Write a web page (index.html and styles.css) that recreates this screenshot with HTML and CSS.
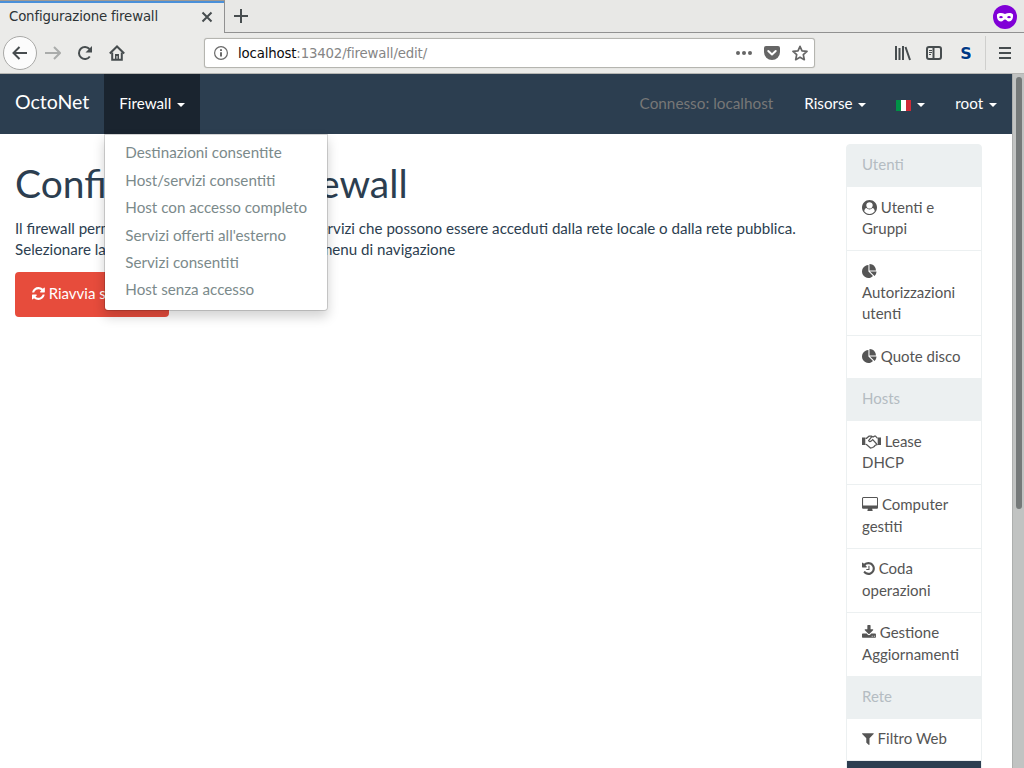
FILE: index.html
```
<!DOCTYPE html>
<html lang="it">
<head>
    <meta charset="UTF-8">
    <meta name="viewport" content="width=device-width, initial-scale=1.0">
    <title>Configurazione firewall</title>
    <link rel="stylesheet" href="styles.css">
</head>
<body>
    <!-- Browser window -->
    <div class="tab-bar">
        <div class="tab">
            <span class="tab-title">Configurazione firewall</span>
            <svg class="tab-close" viewBox="0 0 12 12"><path d="M1.5 1.5l9 9M10.5 1.5l-9 9"/></svg>
        </div>
        <svg class="tab-new" viewBox="0 0 14 14"><path d="M7 0v14M0 7h14"/></svg>
        <svg class="private" viewBox="0 0 24 24">
            <circle cx="12" cy="12" r="12" fill="#8000d7"/>
            <path fill="#fff" fill-rule="evenodd" d="M4 9.500C6 7.600 9 7.600 12 9c3-1.400 6-1.400 8 .5.400 4-1.200 7-4 7-2 0-2.500-2-4-2s-2 2-4 2c-2.800 0-4.400-3-4-7zM6 12.200c1 1.300 3 1.300 4 0-1-1.500-3-1.500-4 0zm8 0c1 1.300 3 1.300 4 0-1-1.500-3-1.500-4 0z"/>
        </svg>
    </div>
    <div class="toolbar">
        <div class="back-button">
            <svg viewBox="0 0 16 16"><path d="M15 8H1.500M7.500 2L1.500 8l6 6"/></svg>
        </div>
        <svg class="forward" viewBox="0 0 16 16"><path d="M0 8h14.500M9 2l6 6-6 6"/></svg>
        <svg class="reload" viewBox="0 0 16 16"><path d="M12.800 11.500A6 6 0 1 1 12.500 4"/><path class="solid" d="M15 1v6.500H8.500z"/></svg>
        <svg class="home" viewBox="0 0 16 16"><path d="M.8 8.500L8 1.500l7.200 7"/><path d="M3.200 7.500v7.200h9.600V7.500"/><path class="solid" d="M6 15v-4.500h1.500V15zM8.500 15v-4.500H10V15zM6 9h4v2H6z"/></svg>
        <div class="url-bar">
            <svg class="info" viewBox="0 0 14 14"><circle cx="7" cy="7" r="6.400"/><path class="mark" d="M7 6.200v4.300M7 3.300v1.700"/></svg>
            <span class="url"><span class="host">localhost</span>:13402/firewall/edit/</span>
            <svg class="dots" viewBox="0 0 16 4"><circle cx="2" cy="2" r="2"/><circle cx="8" cy="2" r="2"/><circle cx="14" cy="2" r="2"/></svg>
            <svg class="pocket" viewBox="0 0 16 16"><path d="M2 1h12q2 0 2 2v4a8 8 0 0 1-16 0V3q0-2 2-2z"/><path class="check" d="M4.300 6L8 9.500 11.700 6"/></svg>
            <svg class="star" viewBox="0 0 16 16"><path d="M8 1.300l2 4.500 5 .6-3.700 3.300 1 5L8 12.200l-4.300 2.500 1-5L1 6.400l5-.6z"/></svg>
        </div>
        <svg class="library" viewBox="0 0 16 16"><path d="M1 1v14M4.500 3v12M8 1v14M10.500 2l4.500 13"/></svg>
        <svg class="sidebars" viewBox="0 0 16 16"><rect x="1" y="2" width="14" height="12" rx="2"/><path d="M7.500 2v12"/><path class="thin" d="M3 5.500h3M3 7.500h3M3 9.500h2"/></svg>
        <span class="addon">S</span>
        <span class="separator"></span>
        <svg class="menu" viewBox="0 0 12 12"><path d="M0 1h12M0 6h12M0 11h12"/></svg>
    </div>

    <!-- Page -->
    <div class="viewport">
        <div class="page">
            <nav class="navbar">
                <a class="brand">OctoNet</a>
                <div class="nav-item open">
                    <a class="nav-link">Firewall <b class="caret"></b></a>
                    <ul class="dropdown-menu">
                        <li>Destinazioni consentite</li>
                        <li>Host/servizi consentiti</li>
                        <li>Host con accesso completo</li>
                        <li>Servizi offerti all'esterno</li>
                        <li>Servizi consentiti</li>
                        <li>Host senza accesso</li>
                    </ul>
                </div>
                <span class="nav-text">Connesso: localhost</span>
                <a class="nav-link">Risorse <b class="caret"></b></a>
                <a class="nav-link"><svg class="flag" viewBox="0 0 15 11"><path fill="#fff" d="M0 0h15v11H0z"/><path fill="#009246" d="M0 0h5v11H0z"/><path fill="#ce2b37" d="M10 0h5v11h-5z"/></svg> <b class="caret"></b></a>
                <a class="nav-link">root <b class="caret"></b></a>
            </nav>

            <div class="content">
                <main class="main">
                    <h1>Configurazione firewall</h1>
                    <p>Il firewall permette di specificare gli host ed i servizi che possono essere acceduti dalla rete locale o dalla rete pubblica.<br>
                    Selezionare la voce da configurare mediante il menu di navigazione</p>
                    <button class="btn-danger"><svg class="icon" viewBox="128 0 1536 1792"><path d="M1639 1056q0 5-1 7-64 268-268 434.500t-478 166.500q-146 0-282.500-55t-243.500-157l-129 129q-19 19-45 19t-45-19-19-45v-448q0-26 19-45t45-19h448q26 0 45 19t19 45-19 45l-137 137q71 66 161 102t187 36q134 0 250-65t186-179q11-17 53-117 8-23 30-23h192q13 0 22.500 9.500t9.500 22.500zm25-800v448q0 26-19 45t-45 19h-448q-26 0-45-19t-19-45 19-45l138-138q-148-137-349-137-134 0-250 65t-186 179q-11 17-53 117-8 23-30 23h-199q-13 0-22.500-9.500t-9.500-22.500v-7q65-268 270-434.500t480-166.500q146 0 284 55.500t245 156.500l130-129q19-19 45-19t45 19 19 45z"/></svg> Riavvia servizio</button>
                </main>

                <aside class="list-group">
                    <div class="list-item heading">Utenti</div>
                    <a class="list-item"><svg class="icon" viewBox="0 0 1792 1792"><path d="M1523 1339q-22-155-87.500-257.500t-184.500-118.500q-67 74-159.500 115.500t-195.500 41.500-195.500-41.500-159.500-115.500q-119 16-184.500 118.500t-87.500 257.500q106 150 271 237.500t356 87.500 356-87.500 271-237.500zm-243-699q0-159-112.500-271.500t-271.500-112.500-271.500 112.500-112.500 271.500 112.500 271.500 271.500 112.500 271.500-112.500 112.500-271.500zm512 256q0 182-71 347.500t-190.500 286-285.500 191.500-349 71-349-71-285.500-191.500-190.500-286-71-347.500 71-348 191-286 286-191 348-71 348 71 286 191 191 286 71 348z"/></svg> Utenti e Gruppi</a>
                    <a class="list-item"><svg class="icon" viewBox="0 0 1792 1792"><path d="M768 890l546 546q-106 108-247.500 168t-298.500 60q-209 0-385.500-103t-279.500-279.500-103-385.500 103-385.500 279.500-279.500 385.500-103v762zm187 6h773q0 157-60 298.500t-168 247.500zm709-128h-768v-768q209 0 385.500 103t279.500 279.500 103 385.500z"/></svg> Autorizzazioni utenti</a>
                    <a class="list-item"><svg class="icon" viewBox="0 0 1792 1792"><path d="M768 890l546 546q-106 108-247.500 168t-298.500 60q-209 0-385.500-103t-279.500-279.500-103-385.500 103-385.500 279.500-279.500 385.500-103v762zm187 6h773q0 157-60 298.500t-168 247.500zm709-128h-768v-768q209 0 385.500 103t279.500 279.500 103 385.500z"/></svg> Quote disco</a>
                    <div class="list-item heading">Hosts</div>
                    <a class="list-item"><svg class="icon handshake" viewBox="0 0 19 15"><path class="solid" d="M0 3.500h3.300v7.500H0zM15.700 3.500H19v7.500h-3.300z"/><path d="M3.500 4.300h1L7 2.200h2.500L11 3l1.500-.8h1l2 2.100M9.800 2.700L6.600 6.500q.8 2 2.900.3l1.200-1.200 4 4.400M3.500 10.200l1 .3 4 3.500 2.200-.5 1.500-1 1-1.200 2.500-.8"/></svg> Lease DHCP</a>
                    <a class="list-item"><svg class="icon" viewBox="-64 0 1920 1792"><path d="M1728 992v-832q0-13-9.500-22.500t-22.500-9.500h-1600q-13 0-22.500 9.500t-9.500 22.500v832q0 13 9.500 22.500t22.500 9.500h1600q13 0 22.500-9.500t9.500-22.500zm128-832v1088q0 66-47 113t-113 47h-544q0 37 16 77.500t32 71 16 43.500q0 26-19 45t-45 19h-512q-26 0-45-19t-19-45q0-14 16-44t32-70 16-78h-544q-66 0-113-47t-47-113v-1088q0-66 47-113t113-47h1600q66 0 113 47t47 113z"/></svg> Computer gestiti</a>
                    <a class="list-item"><svg class="icon" viewBox="128 0 1536 1792"><path d="M1664 896q0 156-61 298t-164 245-245 164-298 61q-172 0-327-72.500t-264-204.500q-7-10-6.500-22.500t8.500-20.500l137-138q10-9 25-9 16 2 23 12 73 95 179 147t225 52q104 0 198.500-40.500t163.500-109.500 109.500-163.500 40.500-198.500-40.500-198.500-109.500-163.500-163.500-109.500-198.500-40.500q-98 0-188 35.500t-160 101.500l137 138q31 30 14 69-17 40-59 40h-448q-26 0-45-19t-19-45v-448q0-42 40-59 39-17 69 14l130 129q107-101 244.500-156.500t284.500-55.500q156 0 298 61t245 164 164 245 61 298zm-640-288v448q0 14-9 23t-23 9h-320q-14 0-23-9t-9-23v-64q0-14 9-23t23-9h224v-352q0-14 9-23t23-9h64q14 0 23 9t9 23z"/></svg> Coda operazioni</a>
                    <a class="list-item"><svg class="icon" viewBox="64 0 1664 1792"><path d="M1344 1344q0-26-19-45t-45-19-45 19-19 45 19 45 45 19 45-19 19-45zm256 0q0-26-19-45t-45-19-45 19-19 45 19 45 45 19 45-19 19-45zm128-224v320q0 40-28 68t-68 28h-1472q-40 0-68-28t-28-68v-320q0-40 28-68t68-28h465l135 136q58 56 136 56t136-56l136-136h464q40 0 68 28t28 68zm-325-569q17 41-14 70l-448 448q-18 19-45 19t-45-19l-448-448q-31-29-14-70 17-39 59-39h256v-448q0-26 19-45t45-19h256q26 0 45 19t19 45v448h256q42 0 59 39z"/></svg> Gestione Aggiornamenti</a>
                    <div class="list-item heading">Rete</div>
                    <a class="list-item"><svg class="icon" viewBox="192 0 1408 1792"><path d="M1595 295q17 41-14 70l-493 493v742q0 42-39 59-13 5-25 5-27 0-45-19l-256-256q-19-19-19-45v-486l-493-493q-31-29-14-70 17-39 59-39h1280q42 0 59 39z"/></svg> Filtro Web</a>
                    <a class="list-item active"></a>
                </aside>
            </div>
        </div>
        <div class="scrollbar"><div class="thumb"></div></div>
    </div>
</body>
</html>
```
FILE: styles.css
```
* {
    box-sizing: border-box;
}

body {
    margin: 0;
    height: 100vh;
    overflow: hidden;
    display: flex;
    flex-direction: column;
    font-family: Lato, "Liberation Sans", sans-serif;
    font-size: 15px;
    line-height: 1.42857;
    color: #2c3e50;
    background-color: #fff;
}

svg {
    flex: none;
}

/* Browser tabs */
.tab-bar {
    height: 33px;
    flex: none;
    display: flex;
    align-items: center;
    background-color: #e8e8e6;
    box-shadow: inset 0 -1px #919191;
}

.tab {
    width: 225px;
    height: 33px;
    padding: 0 11px 2px 9px;
    display: flex;
    align-items: center;
    justify-content: space-between;
    background-color: #ebebe9;
    border-top: 1px solid #a09a94;
    border-right: 1px solid #919191;
    box-shadow: inset 0 2px #4a90d9;
}

.tab-title {
    font: 13.33px "DejaVu Sans", sans-serif;
    letter-spacing: -0.17px;
    color: #2e3436;
}

.tab-close {
    width: 12px;
    height: 12px;
    margin-top: 2px;
}

.tab-new {
    width: 14px;
    height: 14px;
    margin-left: 9px;
    margin-bottom: 1px;
}

.private {
    width: 24px;
    height: 24px;
    margin-left: auto;
    margin-right: 7px;
}

/* Browser toolbar */
.toolbar {
    height: 41px;
    flex: none;
    display: flex;
    align-items: center;
    padding: 0 13px 0 3px;
    background-color: #ebebe9;
    border-bottom: 1px solid #b6b6b3;
}

.toolbar svg,
.tab-close,
.tab-new {
    fill: none;
    stroke: #474d4f;
    stroke-width: 2;
}

.toolbar .solid {
    fill: #474d4f;
    stroke: none;
}

.back-button {
    width: 34px;
    height: 34px;
    flex: none;
    display: flex;
    align-items: center;
    justify-content: center;
    border: 1px solid #a9a9a7;
    border-radius: 50%;
    background-color: #fcfcfc;
}

.back-button svg,
.forward,
.reload,
.home {
    width: 16px;
    height: 16px;
}

.toolbar .forward {
    margin-left: 8px;
    stroke: #aaacab;
}

.reload {
    margin-left: 16px;
}

.home {
    margin-left: 16px;
}

.url-bar {
    width: 611px;
    height: 30px;
    margin-left: 79px;
    padding: 0 6px 0 9px;
    display: flex;
    align-items: center;
    flex: none;
    background-color: #fff;
    border: 1px solid #b5b5b0;
    border-radius: 3px;
    box-shadow: 0 0 1px #b5b5b0;
}

.url-bar .info {
    width: 14px;
    height: 14px;
    stroke: #6a6a6a;
    stroke-width: 1.2;
}

.info .mark {
    stroke-width: 2;
}

.url {
    margin-left: 10px;
    margin-right: auto;
    padding-top: 1px;
    font: 13.33px "DejaVu Sans", sans-serif;
    letter-spacing: -0.17px;
    color: #858585;
}

.host {
    color: #0c0c0d;
}

.url-bar .dots {
    width: 16px;
    height: 4px;
    fill: #666;
    stroke: none;
}

.url-bar .pocket {
    width: 16px;
    height: 16px;
    margin-left: 12px;
    fill: #666;
    stroke: none;
}

.pocket .check {
    fill: none;
    stroke: #fff;
    stroke-width: 2;
    stroke-linecap: round;
    stroke-linejoin: round;
}

.url-bar .star {
    width: 16px;
    height: 16px;
    margin-left: 12px;
    stroke: #666;
    stroke-width: 1.7;
    stroke-linejoin: round;
}

.library {
    width: 16px;
    height: 16px;
    margin-left: 80px;
}

.sidebars {
    width: 16px;
    height: 16px;
    margin-left: 15px;
}

.toolbar .thin {
    stroke-width: 1;
}

.addon {
    width: 14px;
    margin-left: 17px;
    text-align: center;
    font: bold 16px "DejaVu Sans", sans-serif;
    color: #003884;
    text-shadow: 0 0 2px #fff, 0 0 2px #fff;
}

.separator {
    width: 1px;
    height: 34px;
    margin-left: 12px;
    background-color: #cfcfcd;
}

.menu {
    width: 12px;
    height: 12px;
    margin-left: auto;
}

/* Page */
.viewport {
    flex: 1;
    min-height: 0;
    display: flex;
}

.page {
    flex: 1;
    overflow: hidden;
}

.navbar {
    height: 60px;
    display: flex;
    background-color: #2c3e50;
    color: #fff;
}

.brand {
    padding: 17px 15px;
    font-size: 19.5px;
    line-height: 21px;
}

.nav-item {
    position: relative;
    margin-right: auto;
}

.nav-link,
.nav-text {
    display: block;
    height: 60px;
    padding: 18.5px 15px 0;
    font-size: 15.2px;
    line-height: 21px;
}

.nav-text {
    padding-right: 16px;
    font-size: 15.3px;
    color: #777;
}

.open .nav-link {
    background-color: #1a242f;
}

.caret {
    display: inline-block;
    margin-left: 2px;
    vertical-align: middle;
    border-top: 4px solid #fff;
    border-left: 4px solid transparent;
    border-right: 4px solid transparent;
}

.flag {
    width: 15px;
    height: 11px;
    vertical-align: -2px;
}

.dropdown-menu {
    position: absolute;
    top: 100%;
    left: 0;
    z-index: 10;
    margin: 0;
    padding: 5px 0;
    list-style: none;
    white-space: nowrap;
    background-color: #fff;
    background-clip: padding-box;
    border: 1px solid rgba(0,0,0,0.15);
    border-radius: 0 0 4px 4px;
    box-shadow: 0 6px 12px rgba(0,0,0,0.175);
    font-size: 15.2px;
    line-height: 21.43px;
    color: #7b8a8b;
}

.dropdown-menu li {
    padding: 2.3px 20px 3.7px;
}

.content {
    display: flex;
    padding: 10px 30px 0 15px;
}

.main {
    flex: 1;
}

h1 {
    margin: 18px 0 13px;
    font-size: 39px;
    font-weight: 400;
    line-height: 1.1;
}

p {
    margin: 0 0 11px;
    font-size: 15.13px;
    line-height: 21.43px;
    white-space: nowrap;
}

.btn-danger {
    width: 154px;
    padding: 9px 15px 11px;
    border: 2px solid #e74c3c;
    border-radius: 4px;
    background-color: #e74c3c;
    color: #fff;
    font: inherit;
    text-align: left;
}

.icon {
    height: 15px;
    vertical-align: -2px;
    fill: currentColor;
}

.handshake {
    fill: none;
    stroke: currentColor;
    stroke-width: 1.2;
}

.handshake .solid {
    fill: currentColor;
    stroke: none;
}

.list-group {
    width: 136px;
    flex: none;
}

.list-item {
    display: block;
    margin-bottom: -1px;
    padding: 9.3px 15px 10.7px;
    border: 1px solid #ecf0f1;
    color: #555;
}

.list-item:first-child {
    border-radius: 4px 4px 0 0;
}

.heading {
    background-color: #ecf0f1;
    color: #b4bcc2;
}

.active {
    height: 44px;
    background-color: #2c3e50;
}

.scrollbar {
    width: 12px;
    padding: 3px 3px 0;
    background-color: #c1c3c2;
    border-left: 1px solid #adafae;
}

.thumb {
    width: 6px;
    height: 432px;
    border-radius: 3px;
    background-color: #757979;
}
```
